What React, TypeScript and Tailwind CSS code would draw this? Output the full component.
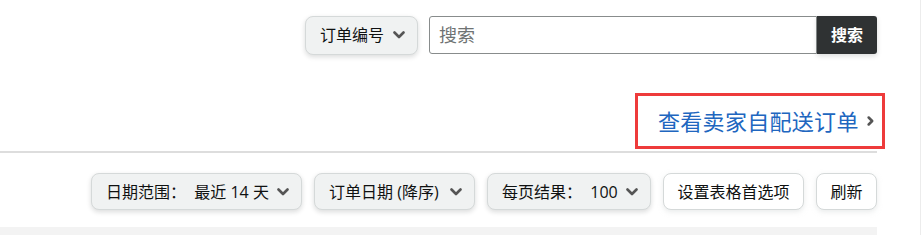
import React from 'react';

const font = { fontFamily: '"Open Sans", "Noto Sans CJK SC", sans-serif' };

const Chevron = ({ className = '' }: { className?: string }) => (
  <svg viewBox="0 0 12 8" className={`w-[12px] h-[8px] ${className}`}>
    <path d="M1.5 1.5 L6 6 L10.5 1.5" fill="none" stroke="#555" strokeWidth="2.6" strokeLinecap="round" strokeLinejoin="round" />
  </svg>
);

const Dropdown = ({ label, className = '' }: { label: string; className?: string }) => (
  <button
    className={`flex items-center justify-between h-[37px] rounded-lg border border-[#d5d9d9] bg-[#f0f2f2] pl-[14px] pr-[12px] text-[16px] text-[#0f1111] shadow-[0_2px_5px_rgba(15,17,17,0.15)] whitespace-pre ${className}`}
  >
    <span>{label}</span>
    <Chevron />
  </button>
);

const PlainButton = ({ label, className = '' }: { label: string; className?: string }) => (
  <button
    className={`flex items-center justify-center h-[37px] rounded-lg border border-[#d5d9d9] bg-white text-[16px] text-[#0f1111] shadow-[0_2px_5px_rgba(213,217,217,0.5)] ${className}`}
  >
    {label}
  </button>
);

export default function App() {
  return (
    <div className="w-[924px] h-[235px] bg-white overflow-hidden flex" style={font}>
      <div className="w-[877px] flex flex-col shrink-0">
        {/* search row */}
        <div className="flex justify-end items-center pt-[15px] h-[55px]">
          <Dropdown label="订单编号" className="w-[113px] h-[39px]" />
          <div className="flex ml-[11px] h-[38px]">
            <input
              placeholder="搜索"
              className="w-[388px] h-full border border-[#888c8c] rounded-l-[3px] px-[9px] text-[18px] placeholder-[#6f7373] outline-none"
            />
            <button className="w-[60px] h-full bg-[#2f3233] text-white text-[16px] font-bold rounded-r-[3px] shadow-[0_2px_5px_rgba(15,17,17,0.15)]">
              搜索
            </button>
          </div>
        </div>

        {/* link row */}
        <div className="flex justify-end mt-[38px]">
          <a className="flex items-center w-[250px] h-[56px] mr-[-8px] border-[3px] border-[#ee3b3b] pl-[20px] text-[22px] text-[#2066bf] cursor-pointer">
            <span className="tracking-[0.3px]">查看卖家自配送订单</span>
            <svg viewBox="0 0 8 12" className="w-[7px] h-[10px] ml-[8px]">
              <path d="M1.8 1.8 L6 6 L1.8 10.2" fill="none" stroke="#555" strokeWidth="3" strokeLinecap="round" strokeLinejoin="round" />
            </svg>
          </a>
        </div>

        <div className="h-[2px] bg-[#dddddd] mt-[2px]" />

        {/* filter row */}
        <div className="flex justify-end items-center gap-[12px] mt-[20px]">
          <Dropdown label="日期范围：  最近 14 天" className="w-[211px]" />
          <Dropdown label="订单日期 (降序)" className="w-[161px]" />
          <Dropdown label="每页结果：  100" className="w-[164px]" />
          <PlainButton label="设置表格首选项" className="w-[141px]" />
          <PlainButton label="刷新" className="w-[61px]" />
        </div>

        <div className="h-[8px] bg-[#f3f3f3] mt-[17px]" />
      </div>
      <div className="flex-1 flex justify-end pr-[3px]">
        <div className="w-px h-full bg-[#ececec]" />
      </div>
    </div>
  );
}
